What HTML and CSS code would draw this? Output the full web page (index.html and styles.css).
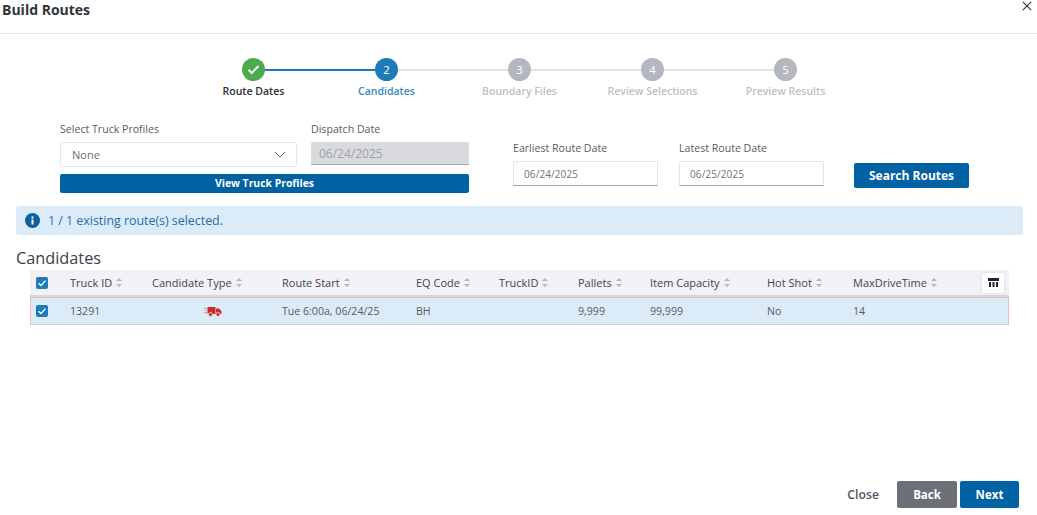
FILE: index.html
```html
<!DOCTYPE html>
<html lang="en">
<head>
<meta charset="utf-8">
<title>Build Routes</title>
<link rel="stylesheet" href="styles.css">
</head>
<body>
<div class="modal">
  <header class="modal-head">
    <h1>Build Routes</h1>
    <button class="x" aria-label="Close"><svg width="10" height="10" viewBox="0 0 10 10"><path d="M.8.8l8.400 8.400M9.200.8L.8 9.200" stroke="#30343a" stroke-width="1.100" fill="none"/></svg></button>
  </header>
  <ol class="stepper">
    <li class="step done"><span class="dot"><svg width="13" height="11" viewBox="0 0 13 11"><path d="M1.500 5.800l3.300 3.200 6.700-7" stroke="#fff" stroke-width="1.900" fill="none"/></svg></span><span class="lbl">Route Dates</span></li>
    <li class="step active"><span class="dot">2</span><span class="lbl">Candidates</span></li>
    <li class="step"><span class="dot">3</span><span class="lbl">Boundary Files</span></li>
    <li class="step"><span class="dot">4</span><span class="lbl">Review Selections</span></li>
    <li class="step"><span class="dot">5</span><span class="lbl">Preview Results</span></li>
  </ol>
  <section class="form">
    <div class="form-left">
      <div class="form-left-row">
        <div class="field f-select">
          <label>Select Truck Profiles</label>
          <div class="select"><span>None</span><svg width="12" height="7" viewBox="0 0 12 7"><path d="M1 1l5 5 5-5" stroke="#555b63" stroke-width="1" fill="none"/></svg></div>
        </div>
        <div class="field f-dispatch">
          <label>Dispatch Date</label>
          <div class="input disabled">06/24/2025</div>
        </div>
      </div>
      <button class="btn wide">View Truck Profiles</button>
    </div>
    <div class="form-right">
      <div class="field f-date">
        <label>Earliest Route Date</label>
        <div class="input">06/24/2025</div>
      </div>
      <div class="field f-date">
        <label>Latest Route Date</label>
        <div class="input">06/25/2025</div>
      </div>
      <button class="btn search">Search Routes</button>
    </div>
  </section>
  <div class="alert">
    <svg width="15" height="15" viewBox="0 0 15 15"><circle cx="7.500" cy="7.500" r="7.500" fill="#0b629f"/><rect x="6.500" y="6.500" width="2" height="5" fill="#fff"/><rect x="6.500" y="3.500" width="2" height="2" fill="#fff"/></svg>
    <span>1 / 1 existing route(s) selected.</span>
  </div>
  <h2 class="section-title">Candidates</h2>
  <div class="table">
    <div class="tr thead">
      <span class="cb"><svg width="12" height="12" viewBox="0 0 12 12"><path d="M2.500 6.200l2.500 2.400 4.500-5" stroke="#fff" stroke-width="1.400" fill="none"/></svg></span>
      <span class="th">Truck ID<i class="sort"></i></span>
      <span class="th">Candidate Type<i class="sort"></i></span>
      <span class="th">Route Start<i class="sort"></i></span>
      <span class="th">EQ Code<i class="sort"></i></span>
      <span class="th">TruckID<i class="sort"></i></span>
      <span class="th">Pallets<i class="sort"></i></span>
      <span class="th">Item Capacity<i class="sort"></i></span>
      <span class="th">Hot Shot<i class="sort"></i></span>
      <span class="th">MaxDriveTime<i class="sort"></i></span>
      <span class="col-btn"><svg width="11" height="9" viewBox="0 0 11 9"><path d="M0 0h11v3H0zM1 4h2v5H1zM4.500 4h2v5h-2zM8 4h2v5H8z" fill="#1d2733"/></svg></span>
    </div>
    <div class="tr tbody">
      <span class="cb"><svg width="12" height="12" viewBox="0 0 12 12"><path d="M2.500 6.200l2.500 2.400 4.500-5" stroke="#fff" stroke-width="1.400" fill="none"/></svg></span>
      <span>13291</span>
      <span class="type"><svg width="18" height="11" viewBox="0 0 18 11"><path d="M3.500 1h8v7h-8zM12 2.500h3l2.500 2.800V8H12z" fill="#c92c2c"/><path d="M0 2.500h3.500M.5 4.500h3M0 6.500h3.500" stroke="#e39b9f" stroke-width="1"/><circle cx="6.500" cy="8.500" r="2" fill="#c92c2c" stroke="#dcebf8" stroke-width=".8"/><circle cx="14" cy="8.500" r="2" fill="#c92c2c" stroke="#dcebf8" stroke-width=".8"/></svg></span>
      <span>Tue 6:00a, 06/24/25</span>
      <span>BH</span>
      <span></span>
      <span>9,999</span>
      <span>99,999</span>
      <span>No</span>
      <span>14</span>
      <span></span>
    </div>
  </div>
  <footer class="modal-foot">
    <button class="link">Close</button>
    <button class="btn back">Back</button>
    <button class="btn next">Next</button>
  </footer>
</div>
</body>
</html>
```
FILE: styles.css
```css
* { box-sizing: border-box; }
html, body { margin: 0; padding: 0; background: #fff; }
body { font-family: "Open Sans", "Noto Sans", "Liberation Sans", sans-serif; color: #4f5660; }
.modal { width: 1037px; height: 515px; display: flex; flex-direction: column; overflow: hidden; }
button { font-family: inherit; border: 0; padding: 0; background: none; }

.modal-head { height: 34px; border-bottom: 1px solid #e4e5e8; display: flex; justify-content: space-between; align-items: flex-start; padding: 0 5px 0 2px; }
.modal-head h1 { margin: 0; font-size: 14px; line-height: 20px; font-weight: 700; color: #30343a; }
.x { width: 10px; height: 10px; margin-top: 1px; display: flex; }

.stepper { list-style: none; margin: 24px 0 0 187px; padding: 0; display: grid; grid-template-columns: repeat(5, 133px); }
.step { position: relative; display: flex; flex-direction: column; align-items: center; color: #bcbfc7; }
.step::after { content: ""; position: absolute; left: 66px; width: 133px; top: 11px; height: 2px; background: #e2e3e8; }
.step:last-child::after { display: none; }
.step.done::after { background: #1f7ab8; height: 1.500px; }
.dot { position: relative; z-index: 1; width: 23px; height: 23px; border-radius: 50%; background: #b4b7c0; color: #fff; font-size: 11.500px; font-weight: 500; display: flex; align-items: center; justify-content: center; }
.done .dot { background: #4caa4e; }
.active .dot { background: #1f7ab8; }
.lbl { margin-top: 3px; font-size: 10.500px; line-height: 14px; font-weight: 600; white-space: nowrap; }
.done .lbl { color: #2c3036; }
.active .lbl { color: #3a86bd; }

.form { display: flex; margin: 25px 0 0 60px; height: 70px; }
.form-left { width: 409px; }
.form-left-row { display: flex; gap: 14px; height: 51px; }
.field { display: flex; flex-direction: column; }
label { font-size: 10.600px; line-height: 12px; color: #555b63; white-space: nowrap; height: 19px; }
.f-select { width: 237px; }
.f-dispatch { width: 158px; }
.select { height: 25px; border: 1px solid #e6e7ec; border-radius: 2px; display: flex; align-items: center; justify-content: space-between; padding: 0 10px 0 11px; font-size: 11px; color: #666c75; }
.input { height: 25px; border: 1px solid #e4e5ea; border-bottom: 1px solid #a2a5ad; border-radius: 2px 2px 0 0; padding: 0 10px; font-size: 10px; line-height: 24px; color: #6d727b; letter-spacing: .1px; }
.input.disabled { height: 23px; background: #d9dade; border-color: #d9dade; border-bottom-color: #a2a5ad; padding-left: 7px; font-size: 12px; line-height: 22px; letter-spacing: 0; color: #9ea2aa; }
.btn { background: #0061a3; color: #fff; font-weight: 700; border-radius: 2px; }
.wide { display: block; width: 409px; height: 19px; font-size: 10.400px; line-height: 19px; }
.form-right { display: flex; margin-left: 44px; padding-top: 19px; }
.f-date { width: 145px; margin-right: 21px; }
.f-date + .f-date { margin-right: 30px; }
.search { width: 115px; height: 25px; margin-top: 21px; font-size: 12px; }

.alert { margin: 13px 14px 0 16px; height: 29px; background: #dcebf8; border-radius: 3px; display: flex; align-items: center; gap: 8px; padding-left: 9px; font-size: 12.400px; color: #1f6fa8; }
.section-title { margin: 14px 0 0 16px; font-size: 16.300px; line-height: 19px; font-weight: 500; color: #3a3f46; }

.table { margin: 2px 28px 0 30px; }
.tr { display: grid; grid-template-columns: 40px 82px 130px 134px 83px 79px 72px 117px 86px 129px 27px; align-items: center; font-size: 10.600px; }
.thead { height: 27px; font-size: 11px; background: #f2f2f6; border-bottom: 2px solid #d5d7de; color: #3f454d; font-weight: 500; }
.tbody { height: 28px; grid-template-columns: 39px 82px 130px 134px 83px 79px 72px 117px 86px 129px 26px; background: #dcebf8; border-bottom: 1px solid #c5d4e2; border-left: 1px solid #f4b6b6; border-right: 1px solid #f4b6b6; border-top: 1px solid #f4b6b6; color: #555b63; }
.th { display: flex; align-items: center; white-space: nowrap; }
.sort { position: relative; display: inline-block; width: 6px; height: 9px; margin-left: 4px; }
.sort::before, .sort::after { content: ""; position: absolute; left: 0; border-left: 3px solid transparent; border-right: 3px solid transparent; }
.sort::before { top: 0; border-bottom: 3px solid #b3b6bd; }
.sort::after { bottom: 0; border-top: 3px solid #b3b6bd; }
.cb { width: 12px; height: 12px; margin-left: 6px; background: #1f7ab8; border-radius: 2px; display: flex; }
.tbody .cb { margin-left: 5px; }
.type { padding-left: 52px; display: flex; }
.col-btn { width: 22px; height: 20px; background: #fff; box-shadow: 0 0 3px rgba(0,0,0,.13); border-radius: 1px; display: flex; align-items: center; justify-content: center; }

.modal-foot { margin-top: auto; height: 34px; display: flex; align-items: flex-start; justify-content: flex-end; padding-right: 18px; }
.link { font-size: 12.300px; font-weight: 600; line-height: 27px; color: #4f5660; margin-right: 18px; }
.back, .next { height: 27px; font-size: 11.500px; }
.back { width: 60px; background: #6d7079; margin-right: 3px; }
.next { width: 59px; }
```
